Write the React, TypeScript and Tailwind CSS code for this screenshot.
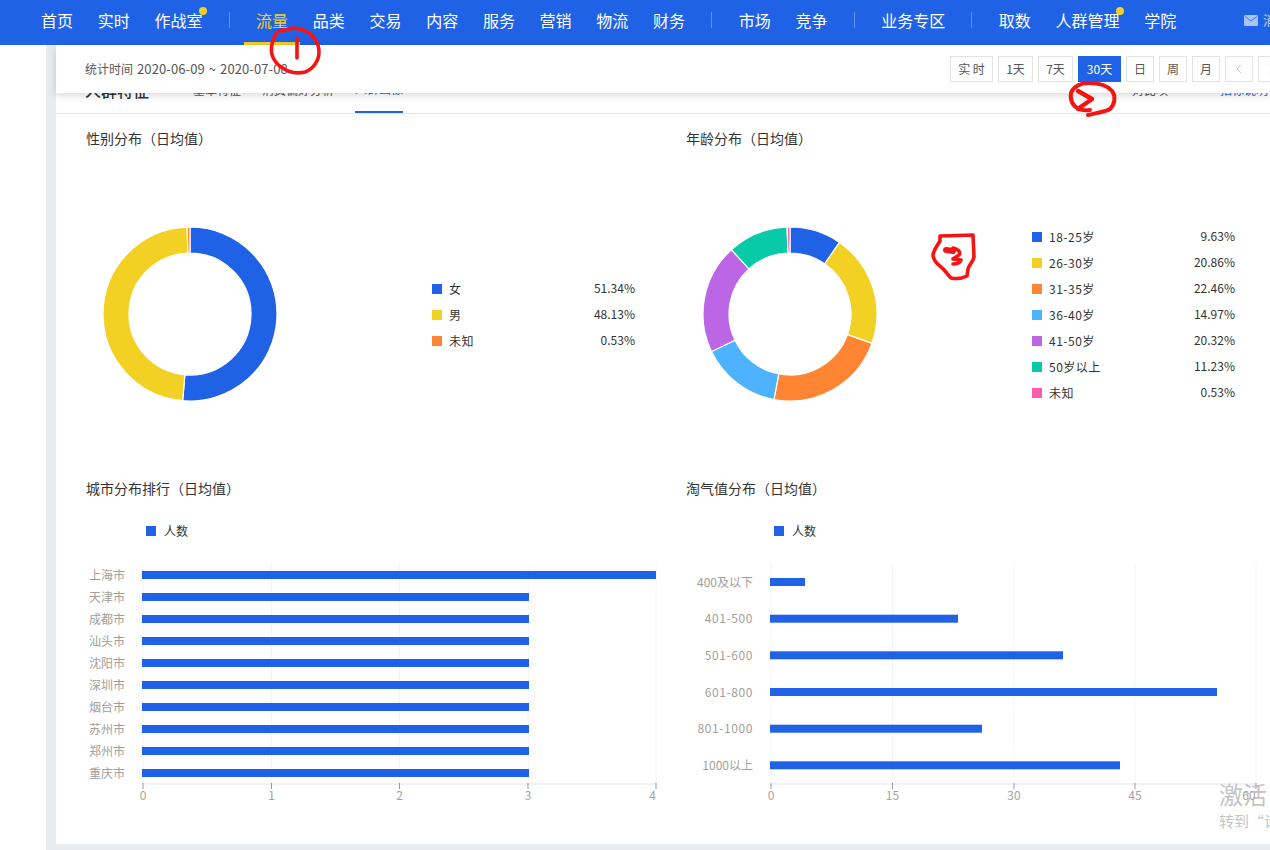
import { ChevronLeft, ChevronRight } from 'lucide-react';

const navGroups = [
  [{ label: '首页' }, { label: '实时' }, { label: '作战室', dot: true }],
  [
    { label: '流量', active: true },
    { label: '品类' },
    { label: '交易' },
    { label: '内容' },
    { label: '服务' },
    { label: '营销' },
    { label: '物流' },
    { label: '财务' },
  ],
  [{ label: '市场' }, { label: '竞争' }],
  [{ label: '业务专区' }],
  [{ label: '取数' }, { label: '人群管理', dot: true }, { label: '学院' }],
];

const ranges = [
  { label: '实 时', w: 'w-[43px]' },
  { label: '1天', w: 'w-[35px]' },
  { label: '7天', w: 'w-[35px]' },
  { label: '30天', w: 'w-[43px]', active: true },
  { label: '日', w: 'w-[28px]' },
  { label: '周', w: 'w-[28px]' },
  { label: '月', w: 'w-[28px]' },
];

const genderData = [
  { name: '女', value: 51.34, color: '#2062e6' },
  { name: '男', value: 48.13, color: '#f3d024' },
  { name: '未知', value: 0.53, color: '#ff8533' },
];

const ageData = [
  { name: '18-25岁', value: 9.63, color: '#2062e6' },
  { name: '26-30岁', value: 20.86, color: '#f3d024' },
  { name: '31-35岁', value: 22.46, color: '#ff8533' },
  { name: '36-40岁', value: 14.97, color: '#4db3ff' },
  { name: '41-50岁', value: 20.32, color: '#bb66e5' },
  { name: '50岁以上', value: 11.23, color: '#08c9a8' },
  { name: '未知', value: 0.53, color: '#fb5fac' },
];

const cityRows = [
  { name: '上海市', y: 76, w: 514 },
  { name: '天津市', y: 98, w: 387 },
  { name: '成都市', y: 120, w: 387 },
  { name: '汕头市', y: 142, w: 387 },
  { name: '沈阳市', y: 164, w: 387 },
  { name: '深圳市', y: 186, w: 387 },
  { name: '烟台市', y: 208, w: 387 },
  { name: '苏州市', y: 230, w: 387 },
  { name: '郑州市', y: 252, w: 387 },
  { name: '重庆市', y: 274, w: 387 },
];

const taoqiRows = [
  { name: '400及以下', y: 83, w: 35 },
  { name: '401-500', y: 119.7, w: 188 },
  { name: '501-600', y: 156.3, w: 293 },
  { name: '601-800', y: 193, w: 447 },
  { name: '801-1000', y: 229.7, w: 212 },
  { name: '1000以上', y: 266.3, w: 350 },
];

const polar = (r: number, deg: number) => {
  const a = ((deg - 90) * Math.PI) / 180;
  return `${95 + r * Math.cos(a)} ${95 + r * Math.sin(a)}`;
};

const Donut = ({ data }: { data: typeof ageData }) => {
  let start = 0;
  return (
    <svg width="190" height="190" viewBox="0 0 190 190" className="shrink-0">
      {data.map(d => {
        const end = start + (d.value / 100) * 360;
        const large = end - start > 180 ? 1 : 0;
        const path = `M${polar(87, start)} A87 87 0 ${large} 1 ${polar(87, end)} L${polar(61, end)} A61 61 0 ${large} 0 ${polar(61, start)} Z`;
        start = end;
        return <path key={d.name} d={path} fill={d.color} stroke="#fff" strokeWidth="1.2" />;
      })}
    </svg>
  );
};

const PieSection = ({ title, data }: { title: string; data: typeof ageData }) => (
  <section className="h-[350px] pt-[14px]">
    <h3 className="h-5 text-[14px] leading-5 text-[#333]">{title}</h3>
    <div className="mt-[71px] ml-[9px] flex items-center">
      <Donut data={data} />
      <ul className="ml-[147px] w-[203px] pt-[2px] text-[12px] text-[#333]">
        {data.map(d => (
          <li key={d.name} className="flex h-[26px] items-center">
            <span className="size-[10px] shrink-0" style={{ background: d.color }} />
            <span className="ml-[7px] flex-1 tracking-[0.5px]">{d.name}</span>
            <span className="pb-[2px]">{d.value.toFixed(2)}%</span>
          </li>
        ))}
      </ul>
    </div>
  </section>
);

type BarChartProps = {
  title: string;
  legendX: number;
  rows: { name: string; y: number; w: number }[];
  x0: number;
  labelX: number;
  ticks: { label: string; x: number; labelX?: number }[];
};

const BarSection = ({ title, legendX, rows, x0, labelX, ticks }: BarChartProps) => (
  <section className="h-[350px] pt-[14px]">
    <h3 className="mb-px h-5 text-[14px] leading-5 text-[#333]">{title}</h3>
    <svg width="600" height="315" viewBox="0 0 600 315" className="block">
      <rect x={legendX} y="27" width="10" height="10" fill="#2062e6" />
      <text x={legendX + 18} y="37" className="fill-[#333] text-[12px]">人数</text>
      {ticks.map(t => (
        <line key={t.label} x1={t.x} x2={t.x} y1="64" y2="284" stroke="#f0f4fa" />
      ))}
      <rect x={x0} y="284" width={ticks[ticks.length - 1].x - x0 + 1} height="2" fill="#f0f2f6" />
      {ticks.map(t => (
        <g key={t.label}>
          <line x1={t.x} x2={t.x} y1="284" y2="290" stroke="#999" />
          <text x={t.labelX ?? t.x} y="301" textAnchor="middle" className="fill-[#a3a3a3] text-[12px]">
            {t.label}
          </text>
        </g>
      ))}
      {rows.map(r => (
        <g key={r.name}>
          <rect x={x0} y={r.y - 4} width={r.w} height="8" fill="#2062e6" />
          <text
            x={labelX}
            y={r.y + 4.5}
            textAnchor="end"
            className={`fill-[#a39e99] text-[12px] ${/^[\d-]+$/.test(r.name) ? 'tracking-[0.6px]' : ''}`}
          >
            {r.name}
          </text>
        </g>
      ))}
    </svg>
  </section>
);

// hand-drawn red marks on top of the screenshot
const Annotations = () => (
  <svg
    width="1270"
    height="850"
    viewBox="0 0 1270 850"
    fill="none"
    stroke="#f51414"
    strokeWidth="3.6"
    strokeLinecap="round"
    strokeLinejoin="round"
    className="pointer-events-none absolute top-0 left-0 z-20"
  >
    <path d="M283 30 C277 30 274 35 272 44 C270 53 273 61 281 67 C288 72 297 74 305 72 C313 69 319 61 319 52 C319 42 312 33 303 30 C296 27 289 28 283 31" />
    <path d="M297 38 L297 58" />
    <path
      d="M1088 115 C1096 113 1105 112 1110 109 C1115 104 1116 96 1112 91 C1107 85 1098 83 1089 83 C1080 83 1073 87 1071 93 C1070 100 1073 106 1079 109 C1083 111 1086 110 1090 110"
      strokeWidth="4"
    />
    <path d="M1078 91 L1092 99 L1082 106 L1078 109" strokeWidth="4.4" />
    <path d="M940 236 L973 235 L974 257 C973 262 969 265 968 269 L967 276 C961 279 956 279 951 278 C947 274 945 270 941 267 C936 263 933 259 933 255 C934 249 937 246 940 241 Z" />
    <path d="M946 250 L953 251" strokeWidth="6" />
    <path d="M953 248 C958 249 961 252 959 255 L953 259 L961 260 C960 263 957 264 953 264" strokeWidth="3.6" />
  </svg>
);

export default function App() {
  return (
    <div className="relative h-[850px] w-[1270px] overflow-hidden bg-white font-['Noto_Sans_CJK_SC','Noto_Sans',sans-serif]">
      <nav className="relative z-10 flex h-[45px] items-center overflow-hidden bg-[#2062e6] pl-[28.65px] text-[16px] whitespace-nowrap text-white">
        {navGroups.map((group, i) => (
          <div key={i} className="flex shrink-0 items-center">
            {i > 0 && <span className="mx-[14px] mb-[5px] h-4 w-px bg-white/30" />}
            {group.map(item => (
              <a
                key={item.label}
                className={`relative flex h-[45px] shrink-0 items-center border-b-[3px] px-[12.35px] pb-[3px] ${item.active ? 'border-[#f5d01f] text-[#f5d01f]' : 'border-transparent'}`}
              >
                {item.label}
                {item.dot && <span className="absolute top-[7px] right-[7.75px] size-2 rounded-full bg-[#f3d024]" />}
              </a>
            ))}
          </div>
        ))}
        <svg width="14" height="11" viewBox="0 0 14 11" className="mb-[5px] ml-[55.5px] shrink-0">
          <rect width="14" height="11" rx="1.5" fill="#a9c4f5" />
          <path d="M1 1.5 L7 6 L13 1.5" fill="none" stroke="#2062e6" strokeWidth="0.8" />
        </svg>
        <span className="mb-[5px] ml-[5px] shrink-0 text-[13px] text-[#c3d5f8]">消息</span>
      </nav>

      <div className="flex h-[805px]">
        <div className="w-[46px] shrink-0 bg-white" />
        <div className="h-full w-[1224px] shrink-0 bg-[#e8ebf0] pl-[10px]">
          <div className="h-[799px] bg-white">
            <div className="relative z-10 flex h-[48px] items-center justify-between bg-white pl-[29px] shadow-[0_2px_8px_rgba(0,0,0,0.16)]">
              <p className="text-[12px] text-[#555]">
                统计时间
                <span className="ml-1 text-[13px] tracking-[0.1px]">
                  2020-06-09<span className="mx-[4px]">~</span>2020-07-08
                </span>
              </p>
              <div className="-mr-[16px] flex w-[336px] shrink-0 gap-[5px] text-[12px] text-[#555]">
                {ranges.map(r => (
                  <button
                    key={r.label}
                    className={`h-[26px] shrink-0 border ${r.w} ${r.active ? 'border-[#2062e6] bg-[#2062e6] text-white' : 'border-[#e3e3e3]'}`}
                  >
                    {r.label}
                  </button>
                ))}
                <button className="flex h-[26px] w-[28px] shrink-0 items-center justify-center border border-[#e3e3e3] text-[#c8c8c8]">
                  <ChevronLeft className="size-4" strokeWidth={1.5} />
                </button>
                <button className="flex h-[26px] w-[28px] shrink-0 items-center justify-center border border-[#e3e3e3] text-[#c8c8c8]">
                  <ChevronRight className="size-4" strokeWidth={1.5} />
                </button>
              </div>
            </div>

            <div className="-mt-[29px] flex h-[50px] items-center border-b border-[#e8e8e8] pl-[29px] text-[12px] text-[#555]">
              <span className="w-[108px] pt-[3px] text-[16px] font-medium text-[#333]">人群特征</span>
              <span className="flex h-full w-[69px] items-center pt-[3px]">基本特征</span>
              <span className="flex h-full w-[93px] items-center pt-[3px]">消费偏好分析</span>
              <span className="flex h-full w-[48px] items-center border-b-2 border-[#2062e6] pt-[3px] text-[#2062e6]">人群画像</span>
              <span className="ml-[729px] flex h-full items-center pt-[3px]">对比项</span>
              <span className="ml-[52px] flex h-full items-center pt-[3px] text-[#2062e6]">指标说明</span>
            </div>

            <div className="grid w-[1200px] grid-cols-[600px_600px] pl-[30px]">
              <PieSection title="性别分布（日均值）" data={genderData} />
              <PieSection title="年龄分布（日均值）" data={ageData} />
              <BarSection
                title="城市分布排行（日均值）"
                legendX={60}
                rows={cityRows}
                x0={56}
                labelX={39}
                ticks={[
                  { label: '0', x: 57 },
                  { label: '1', x: 185.5 },
                  { label: '2', x: 313.5 },
                  { label: '3', x: 442 },
                  { label: '4', x: 570, labelX: 566.5 },
                ]}
              />
              <BarSection
                title="淘气值分布（日均值）"
                legendX={88}
                rows={taoqiRows}
                x0={84}
                labelX={67}
                ticks={[
                  { label: '0', x: 85 },
                  { label: '15', x: 206.5 },
                  { label: '30', x: 328 },
                  { label: '45', x: 449 },
                  { label: '60', x: 570, labelX: 563 },
                ]}
              />
            </div>
          </div>
        </div>
      </div>

      <Annotations />

      <div className="pointer-events-none absolute top-[778px] left-[1219px] z-20 w-[80px] text-[#b4b4b4]/80">
        <p className="text-[24px] leading-[32px] whitespace-nowrap">激活</p>
        <p className="text-[15px] leading-[22px] whitespace-nowrap">转到“设置”</p>
      </div>
    </div>
  );
}
